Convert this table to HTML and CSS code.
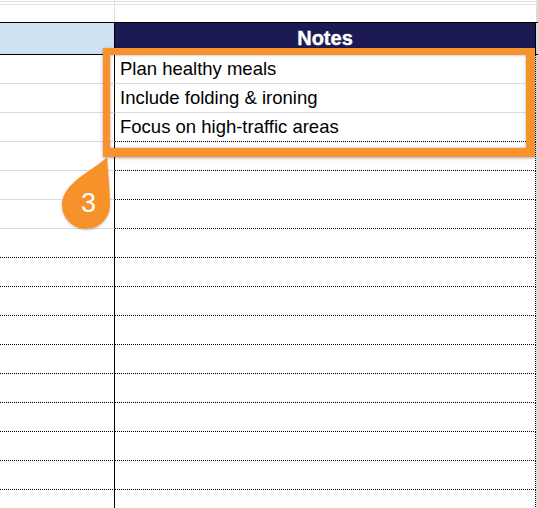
FILE: index.html
```html
<!DOCTYPE html>
<html>
<head>
<meta charset="utf-8">
<link rel="stylesheet" href="styles.css">
</head>
<body>
<div class="sheet">
  <div class="row pre pre-a"><div class="cell left"></div><div class="cell right"></div><div class="gutter"></div></div>
  <div class="row pre pre-b"><div class="cell left"></div><div class="cell right"></div><div class="gutter"></div></div>
  <div class="row pre pre-c"><div class="cell left"></div><div class="cell right"></div><div class="gutter"></div></div>
  <div class="row hdr"><div class="cell left"></div><div class="cell right">Notes</div><div class="gutter"></div></div>
  <div class="row body g"><div class="cell left"></div><div class="cell right">Plan healthy meals</div><div class="gutter"></div></div>
  <div class="row body g"><div class="cell left"></div><div class="cell right">Include folding &amp; ironing</div><div class="gutter"></div></div>
  <div class="row body m"><div class="cell left"></div><div class="cell right">Focus on high-traffic areas</div><div class="gutter"></div></div>
  <div class="row body m"><div class="cell left"></div><div class="cell right"></div><div class="gutter"></div></div>
  <div class="row body m"><div class="cell left"></div><div class="cell right"></div><div class="gutter"></div></div>
  <div class="row body m"><div class="cell left"></div><div class="cell right"></div><div class="gutter"></div></div>
  <div class="row body d"><div class="cell left"></div><div class="cell right"></div><div class="gutter"></div></div>
  <div class="row body d"><div class="cell left"></div><div class="cell right"></div><div class="gutter"></div></div>
  <div class="row body d"><div class="cell left"></div><div class="cell right"></div><div class="gutter"></div></div>
  <div class="row body d"><div class="cell left"></div><div class="cell right"></div><div class="gutter"></div></div>
  <div class="row body d"><div class="cell left"></div><div class="cell right"></div><div class="gutter"></div></div>
  <div class="row body d"><div class="cell left"></div><div class="cell right"></div><div class="gutter"></div></div>
  <div class="row body d"><div class="cell left"></div><div class="cell right"></div><div class="gutter"></div></div>
  <div class="row body d"><div class="cell left"></div><div class="cell right"></div><div class="gutter"></div></div>
  <div class="row body d"><div class="cell left"></div><div class="cell right"></div><div class="gutter"></div></div>
  <div class="row body d"><div class="cell left"></div><div class="cell right"></div><div class="gutter"></div></div>

  <div class="highlight"></div>
  <svg class="callout" width="70" height="90" viewBox="55 150 70 90">
    <defs>
      <filter id="sh" x="-20%" y="-20%" width="140%" height="140%">
        <feDropShadow dx="0" dy="1" stdDeviation="1" flood-color="#000" flood-opacity="0.25"/>
      </filter>
    </defs>
    <path filter="url(#sh)" fill="#f7922c" d="M107,157 C95,170 62,182 62,205 A24,24 0 0 0 110,205 C110,190 108,170 107,157 Z"/>
    <text x="88.5" y="212" text-anchor="middle" class="num">3</text>
  </svg>
</div>
</body>
</html>
```

FILE: styles.css
```css
html, body {
  margin: 0;
  padding: 0;
  background: #fff;
}

.sheet {
  position: relative;
  width: 538px;
  height: 508px;
  overflow: hidden;
  font-family: "Liberation Sans", Arial, sans-serif;
}

.row {
  display: flex;
}

.cell {
  box-sizing: content-box;
}

.left {
  width: 114px;
  border-right: 1px solid #000;
}

.right {
  width: 420px;
  border-right: 1px dotted #000;
}

.gutter {
  width: 2px;
  background: #dcdcdc;
}

/* rows above the header */
.pre .left {
  border-right: 1px solid #e2e2e2;
}
.pre .right {
  border-right: 1px solid #fff;
}
.pre-a { height: 1px; border-bottom: 1px solid #e2e2e2; }
.pre-b { height: 2px; border-bottom: 1px solid #e2e2e2; }
.pre-c { height: 17px; }

/* header */
.hdr {
  height: 31px;
  border-top: 1px solid #000;
  border-bottom: 1px solid #000;
}
.hdr .left {
  background: #cfe2f3;
}
.hdr .right {
  background: #1b1a55;
  border-right: 1px solid #000;
  color: #fff;
  font-weight: bold;
  font-size: 20px;
  text-align: center;
  line-height: 31px;
  -webkit-text-stroke: 0.4px #fff;
}

/* body rows */
.body .left {
  height: 28px;
}
.body .right {
  box-sizing: border-box;
  width: 421px;
  height: 29px;
  padding-left: 5px;
  font-size: 18.5px;
  line-height: 28px;
  color: #000;
  white-space: nowrap;
}
.body .gutter {
  height: 29px;
}
.g .left, .g .right { border-bottom: 1px solid #dadada; }
.m .left { border-bottom: 1px solid #dadada; }
.m .right { border-bottom: 1px dotted #000; }
.d .left, .d .right { border-bottom: 1px dotted #000; }

/* overlay annotation */
.highlight {
  position: absolute;
  left: 103px;
  top: 48px;
  width: 432px;
  height: 109px;
  box-sizing: border-box;
  border-style: solid;
  border-color: #f7922c;
  border-width: 7px 9px 9px 7px;
  box-shadow: 0 1px 3px rgba(0,0,0,0.35), inset 0 0 3px rgba(0,0,0,0.35);
}

.callout {
  position: absolute;
  left: 55px;
  top: 150px;
}

.num {
  fill: #fff;
  font-family: "Liberation Sans", Arial, sans-serif;
  font-size: 27px;
}
```
